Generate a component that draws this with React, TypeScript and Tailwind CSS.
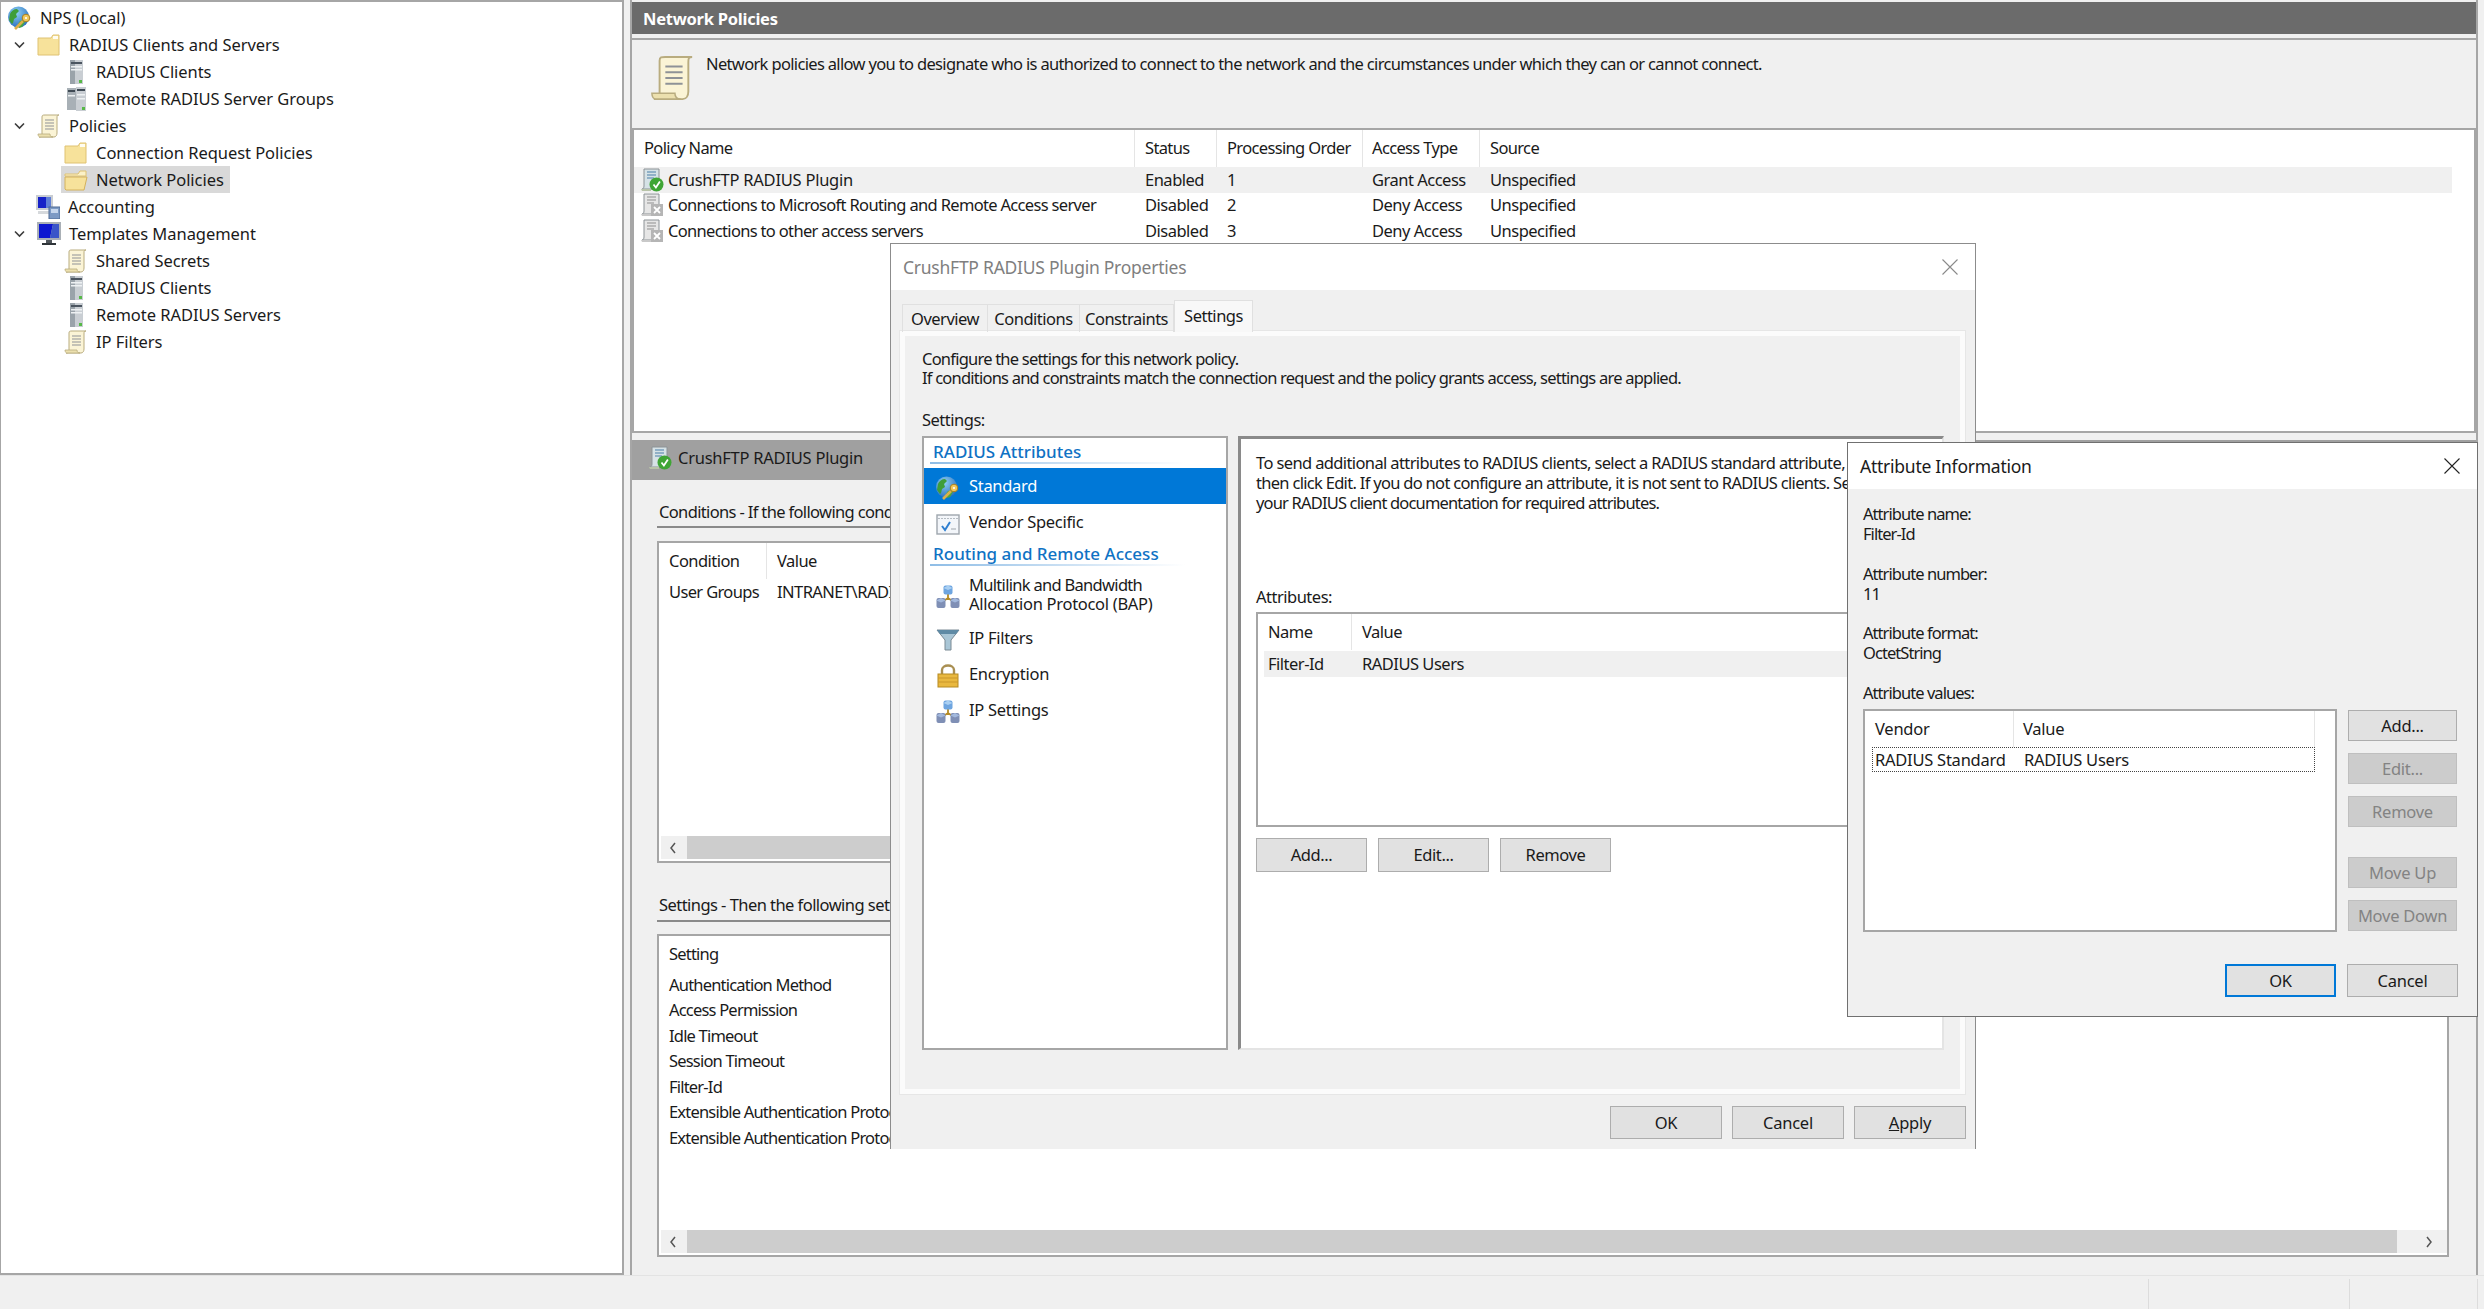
import React from "react";

const Globe = ({ s = 24 }: { s?: number }) => (
  <svg width={s} height={s} viewBox="0 0 24 24" className="shrink-0">
    <defs>
      <radialGradient id="gl" cx="0.4" cy="0.3" r="0.8">
        <stop offset="0" stopColor="#8fd0f5" />
        <stop offset="1" stopColor="#1f66b8" />
      </radialGradient>
    </defs>
    <circle cx="10.5" cy="11" r="10.5" fill="url(#gl)" />
    <path d="M2 8c1-3 4-5 7-5l2 2-3 3 1 3-3 2-1 4-1 1-3-4z" fill="#3f9e3a" />
    <path d="M12 15l4-1 1 2-3 5-3 1-1-4z" fill="#4aa63f" />
    <path d="M7 23l8-8" stroke="#dcb04a" strokeWidth="2.6" />
    <circle cx="18" cy="12" r="3.8" fill="#f0c75a" stroke="#a97f1f" strokeWidth="1" />
    <circle cx="18" cy="12" r="1.1" fill="#fff" />
  </svg>
);
const Folder = () => (
  <svg width="24" height="24" viewBox="0 0 24 24" className="shrink-0">
    <path d="M1 5h13l2-3h6v20H1z" fill="#f7e29b" stroke="#dfc272" strokeWidth="1" />
    <path d="M16 3h5v3h-5z" fill="#fffdf2" />
  </svg>
);
const FolderOpen = () => (
  <svg width="24" height="24" viewBox="0 0 24 24" className="shrink-0">
    <path d="M1 6h13l2-3h6v5H1z" fill="#fbf1c8" stroke="#dfc272" strokeWidth="1" />
    <path d="M1 21V9h22l-3 13H2z" fill="#f7e29b" stroke="#d4b25c" strokeWidth="1" />
  </svg>
);
const Server = () => (
  <svg width="24" height="24" viewBox="0 0 24 24" className="shrink-0">
    <rect x="6" y="0" width="13" height="24" fill="#c9ced3" />
    <rect x="6" y="0" width="5" height="24" fill="#9aa3aa" />
    <rect x="7" y="2" width="11" height="2" fill="#4b5560" />
    <rect x="7" y="6" width="11" height="1.5" fill="#eef1f3" />
    <rect x="7" y="9" width="11" height="1.5" fill="#eef1f3" />
    <rect x="15" y="20" width="3" height="3" fill="#57b947" />
  </svg>
);
const ServerGroup = () => (
  <svg width="24" height="24" viewBox="0 0 24 24" className="shrink-0">
    <rect x="3" y="1" width="9" height="22" fill="#a8b0b6" />
    <rect x="4" y="3" width="7" height="2" fill="#3f4a54" />
    <rect x="4" y="8" width="7" height="1.5" fill="#eef1f3" />
    <rect x="12" y="0" width="10" height="24" fill="#c9ced3" />
    <rect x="13" y="2" width="8" height="2" fill="#3f4a54" />
    <rect x="13" y="7" width="8" height="1.5" fill="#eef1f3" />
    <rect x="13" y="11" width="8" height="1.5" fill="#eef1f3" />
    <rect x="18" y="20" width="3" height="3" fill="#57b947" />
  </svg>
);
const Scroll = ({ s = 24 }: { s?: number }) => (
  <svg width={s} height={s} viewBox="0 0 24 24" className="shrink-0">
    <path d="M5 3c0-2 1-2 3-2h14c-2 0-2 1-2 3v15c0 2-1 4-3 4H2c2 0 3-1 3-3z" fill="#fbf4d6" stroke="#b9ac7f" strokeWidth="1" />
    <path d="M1 20h12c0 2 1 3 3 3H3c-1 0-2-1-2-3z" fill="#ece0ae" stroke="#b9ac7f" strokeWidth="0.8" />
    <path d="M8 6h9M8 9h9M8 12h9M8 15h9" stroke="#8f9297" strokeWidth="1" />
  </svg>
);
const Accounting = () => (
  <svg width="24" height="24" viewBox="0 0 24 24" className="shrink-0">
    <rect x="0" y="0" width="17" height="15" fill="#c9cdd2" />
    <rect x="2" y="2" width="8" height="11" fill="#1621c8" />
    <rect x="10" y="2" width="5" height="11" fill="#5f7fd6" />
    <path d="M2 16h12v3H2z" fill="#d6d9dc" />
    <rect x="13" y="12" width="11" height="12" fill="#7d9ac4" stroke="#4e6a94" strokeWidth="1" />
    <rect x="15" y="14" width="7" height="4" fill="#c6d6ec" />
  </svg>
);
const Monitor = () => (
  <svg width="24" height="24" viewBox="0 0 24 24" className="shrink-0">
    <rect x="0" y="0" width="24" height="18" fill="#aab0b6" />
    <path d="M2 2h14l-3 14H2z" fill="#0c16d0" />
    <path d="M16 2h6v14h-9z" fill="#3a55c9" />
    <rect x="9" y="18" width="6" height="3" fill="#50565c" />
    <rect x="5" y="21" width="14" height="2" fill="#2f3439" />
  </svg>
);
const Policy = ({ on }: { on: boolean }) => (
  <svg width="24" height="24" viewBox="0 0 24 24" className="shrink-0">
    <path d="M4 1h15v20H2c1 0 2-1 2-3z" fill={on ? "#d6e2e6" : "#e6e6e6"} stroke="#8c9296" strokeWidth="1" />
    <path d="M7 4h9M7 7h9M7 10h7" stroke={on ? "#4a7ea8" : "#8f8f8f"} strokeWidth="1" />
    <path d="M1 21h10v2H2z" fill={on ? "#b8c3a8" : "#c9c9c9"} />
    {on ? (
      <>
        <circle cx="16.5" cy="16.5" r="7" fill="#3fa535" />
        <path d="M13.5 16.5l2.4 3 4-6" fill="none" stroke="#fff" strokeWidth="1.8" />
      </>
    ) : (
      <>
        <rect x="11" y="11" width="12" height="12" fill="#b5b5b5" />
        <path d="M14 14l6 6M20 14l-6 6" stroke="#fff" strokeWidth="1.8" />
      </>
    )}
  </svg>
);
const VendorIcon = () => (
  <svg width="24" height="24" viewBox="0 0 24 24" className="shrink-0">
    <rect x="1" y="3" width="22" height="19" fill="#f3f6fa" stroke="#9ea6ad" strokeWidth="1.4" />
    <path d="M2 6.5h20" stroke="#b4bbc2" strokeWidth="1" strokeDasharray="2 1" />
    <path d="M6 14l3 4 5-8" fill="none" stroke="#2f7fd0" strokeWidth="2" />
    <path d="M15 17h5" stroke="#9ea6ad" strokeWidth="1" />
  </svg>
);
const Nodes = () => (
  <svg width="24" height="24" viewBox="0 0 24 24" className="shrink-0">
    <path d="M12 7v8M6 17l6-4 6 4" stroke="#b58a22" strokeWidth="1.8" fill="none" />
    <rect x="7.5" y="0.5" width="9" height="9" rx="2" fill="#6ea5e0" />
    <path d="M7.5 3l4.5-2.5L16.5 3l-4.5 2z" fill="#a9cff2" />
    <rect x="0.5" y="13" width="9" height="10" rx="2" fill="#7f8fb5" />
    <path d="M0.5 15.5l4.5-2.5 4.5 2.5-4.5 2z" fill="#a3b9dd" />
    <rect x="14.5" y="13" width="9" height="10" rx="2" fill="#7f8fb5" />
    <path d="M14.5 15.5l4.5-2.5 4.5 2.5-4.5 2z" fill="#a3b9dd" />
  </svg>
);
const Funnel = () => (
  <svg width="24" height="24" viewBox="0 0 24 24" className="shrink-0">
    <path d="M1 2h22L15 12v10l-6 0V12z" fill="#a9c6d6" stroke="#7b8a94" strokeWidth="1" />
    <path d="M1 2h22l-3 4H4z" fill="#5e8aa5" />
  </svg>
);
const Lock = () => (
  <svg width="24" height="24" viewBox="0 0 24 24" className="shrink-0">
    <path d="M6 10V6c0-6 12-6 12 0v4" fill="none" stroke="#a98f52" strokeWidth="2.4" />
    <rect x="2" y="10" width="20" height="13" fill="#e9b83f" stroke="#b58a22" strokeWidth="1" />
    <path d="M2 14h20M2 18h20" stroke="#c9962a" strokeWidth="1" />
  </svg>
);
const Chev = () => (
  <svg width="11" height="8" viewBox="0 0 11 8" className="shrink-0">
    <path d="M1 1.5l4.5 4.5L10 1.5" fill="none" stroke="#3c3c3c" strokeWidth="1.6" />
  </svg>
);
const CloseX = ({ c }: { c: string }) => (
  <svg width="16" height="16" viewBox="0 0 16 16">
    <path d="M0.5 0.5l15 15M15.5 0.5l-15 15" stroke={c} strokeWidth="1.1" />
  </svg>
);

const TreeRow = ({ ind, chev, icon, text }: { ind: number; chev?: boolean; icon: React.ReactNode; text: string }) => (
  <div className="flex h-[27px] items-center" style={{ paddingLeft: ind }}>
    {chev && <span className="mr-[12px] flex w-[11px]"><Chev /></span>}
    <div className="flex h-[27px] items-center">
      {icon}
      <span className="ml-[8px] whitespace-nowrap">{text}</span>
    </div>
  </div>
);

const Btn = ({ w, h, children, off, blue }: { w: string; h: string; children: React.ReactNode; off?: boolean; blue?: boolean }) => (
  <div
    className={`flex shrink-0 items-center justify-center ${w} ${h} ${
      blue
        ? "border-2 border-[#0078d7] bg-[#e1e1e1]"
        : off
        ? "border border-[#bfbfbf] bg-[#cccccc] text-[#838383]"
        : "border border-[#adadad] bg-[#e1e1e1]"
    }`}
  >
    {children}
  </div>
);

const PolicyRow = ({ on, name, st, n, acc, sel, nt }: { on: boolean; name: string; st: string; n: string; acc: string; sel?: boolean; nt: string }) => (
  <div className={`flex h-[25.5px] items-center tracking-[-0.5px] ${sel ? "mr-[22px] bg-[#f0f0f0]" : ""}`}>
    <div className="flex w-[501px] items-center pl-[6px]">
      <Policy on={on} />
      <span className={`ml-[4px] whitespace-nowrap ${nt}`}>{name}</span>
    </div>
    <div className="w-[82px] pl-[10px]">{st}</div>
    <div className="w-[146px] pl-[10px]">{n}</div>
    <div className="w-[117px] pl-[9px]">{acc}</div>
    <div className="pl-[10px]">Unspecified</div>
  </div>
);

const Scrollbar = () => (
  <div className="mt-auto mb-[2px] ml-[2px] flex h-[23px] bg-[#f0f0f0]">
    <div className="flex w-[26px] items-center justify-center pr-[2px]">
      <svg width="8" height="12" viewBox="0 0 8 12"><path d="M6 1L2 6l4 5" fill="none" stroke="#555" strokeWidth="1.5" /></svg>
    </div>
    <div className="w-[1711px] bg-[#cdcdcd]" />
    <div className="flex w-[50px] items-center justify-end pr-[14px]">
      <svg width="8" height="12" viewBox="0 0 8 12"><path d="M2 1l4 5-4 5" fill="none" stroke="#555" strokeWidth="1.5" /></svg>
    </div>
  </div>
);

const GroupHead = ({ text }: { text: string }) => (
  <div className="relative h-[26px] pl-[9px]">
    <span className="absolute top-[4px] whitespace-nowrap text-[17px] font-medium tracking-[0px] text-[#0f72c4]">{text}</span>
    <div className="absolute bottom-0 left-[6px] h-[2px] w-[255px] bg-linear-to-r from-[#8fbde6] to-transparent" />
  </div>
);

const ListItem = ({ icon, h, sel, children }: { icon: React.ReactNode; h: string; sel?: boolean; children: React.ReactNode }) => (
  <div className={`flex items-center gap-[9px] pl-[12px] tracking-[-0.3px] ${h} ${sel ? "bg-[#0078d7] text-white" : ""}`}>
    <span className="mt-[4px] flex">{icon}</span>
    <div className="pb-[2px] leading-[19px]">{children}</div>
  </div>
);

export default function App() {
  return (
    <div className="relative flex h-[1309px] w-[2484px] flex-col overflow-hidden bg-[#f0f0f0] font-['Noto_Sans',sans-serif] text-[16.5px] leading-[20px] tracking-[-0.25px] text-[#1a1a1a]">
      <div className="flex h-[1275px]">
        {/* Tree */}
        <div className="h-[1275px] w-[624px] shrink-0 border-2 border-l-[1px] border-[#a6a6a6] bg-white pt-[2px] tracking-[-0.05px]">
          <TreeRow ind={7} icon={<Globe />} text="NPS (Local)" />
          <TreeRow ind={13} chev icon={<Folder />} text="RADIUS Clients and Servers" />
          <TreeRow ind={63} icon={<Server />} text="RADIUS Clients" />
          <TreeRow ind={63} icon={<ServerGroup />} text="Remote RADIUS Server Groups" />
          <TreeRow ind={13} chev icon={<Scroll />} text="Policies" />
          <TreeRow ind={63} icon={<Folder />} text="Connection Request Policies" />
          <div className="flex h-[27px] items-center pl-[60px]">
            <div className="flex h-[27px] items-center bg-[#d9d9d9] pl-[3px] pr-[6px]">
              <FolderOpen />
              <span className="ml-[8px] whitespace-nowrap">Network Policies</span>
            </div>
          </div>
          <TreeRow ind={35} icon={<Accounting />} text="Accounting" />
          <TreeRow ind={13} chev icon={<Monitor />} text="Templates Management" />
          <TreeRow ind={63} icon={<Scroll />} text="Shared Secrets" />
          <TreeRow ind={63} icon={<Server />} text="RADIUS Clients" />
          <TreeRow ind={63} icon={<Server />} text="Remote RADIUS Servers" />
          <TreeRow ind={63} icon={<Scroll />} text="IP Filters" />
        </div>

        {/* Right pane */}
        <div className="ml-[6px] flex w-[1848px] shrink-0 flex-col border-x-2 border-[#a6a6a6]">
          <div className="mt-[2px] flex h-[32px] shrink-0 items-center bg-[#6b6b6b] pl-[11px] pt-[2px] font-bold text-white">Network Policies</div>
          <div className="mt-[4px] flex h-[90px] shrink-0 border-t-2 border-[#a6a6a6] bg-[#f0f0f0] pl-[18px] pt-[15px]">
            <Scroll s={46} />
            <div className="ml-[10px] mt-[-1px] whitespace-nowrap tracking-[-0.66px]">Network policies allow you to designate who is authorized to connect to the network and the circumstances under which they can or cannot connect.</div>
          </div>
          <div className="h-[305px] shrink-0 border-2 border-[#a6a6a6] bg-white">
            <div className="flex h-[37px] items-center tracking-[-0.65px]">
              <div className="flex h-full w-[501px] items-center border-r border-[#e5e5e5] pb-[1px] pl-[10px]">Policy Name</div>
              <div className="flex h-full w-[82px] items-center border-r border-[#e5e5e5] pb-[1px] pl-[10px]">Status</div>
              <div className="flex h-full w-[146px] items-center border-r border-[#e5e5e5] pb-[1px] pl-[10px]">Processing Order</div>
              <div className="flex h-full w-[117px] items-center border-r border-[#e5e5e5] pb-[1px] pl-[9px]">Access Type</div>
              <div className="pb-[1px] pl-[10px]">Source</div>
            </div>
            <PolicyRow sel on nt="tracking-[-0.25px]" name="CrushFTP RADIUS Plugin" st="Enabled" n="1" acc="Grant Access" />
            <PolicyRow on={false} nt="tracking-[-0.67px]" name="Connections to Microsoft Routing and Remote Access server" st="Disabled" n="2" acc="Deny Access" />
            <PolicyRow on={false} nt="tracking-[-0.67px]" name="Connections to other access servers" st="Disabled" n="3" acc="Deny Access" />
          </div>
          <div className="mt-[7px] flex h-[40px] shrink-0 items-center bg-[#a0a0a0] pb-[5px] pl-[16px]">
            <Policy on />
            <span className="ml-[6px]">CrushFTP RADIUS Plugin</span>
          </div>
          <div className="flex flex-1 flex-col pl-[25px] pr-[27px]">
            <div className="flex h-[48px] shrink-0 items-end border-b-2 border-[#8a8a8a] pb-[4px] pl-[2px] tracking-[-0.65px]">Conditions - If the following conditions are met:</div>
            <div className="mt-[13px] flex h-[322px] shrink-0 flex-col border-2 border-[#a6a6a6] bg-white tracking-[-0.55px]">
              <div className="flex h-[36px] shrink-0 items-center">
                <div className="flex h-full w-[108px] items-center border-r border-[#e5e5e5] pl-[10px]">Condition</div>
                <div className="pl-[10px]">Value</div>
              </div>
              <div className="flex h-[26px] items-center">
                <div className="w-[108px] pl-[10px] tracking-[-0.65px]">User Groups</div>
                <div className="pl-[10px]">INTRANET\RADIUS Users</div>
              </div>
              <Scrollbar />
            </div>
            <div className="mt-[32px] flex h-[27px] shrink-0 items-start border-b-2 border-[#8a8a8a] pl-[2px] tracking-[-0.55px]">Settings - Then the following settings are applied:</div>
            <div className="mt-[12px] flex h-[323px] shrink-0 flex-col border-2 border-[#a6a6a6] bg-white tracking-[-0.8px]">
              <div className="flex h-[36px] shrink-0 items-center pl-[10px]">Setting</div>
              {["Authentication Method", "Access Permission", "Idle Timeout", "Session Timeout", "Filter-Id", "Extensible Authentication Protocol Method", "Extensible Authentication Protocol Configuration"].map((t) => (
                <div key={t} className="flex h-[25.5px] shrink-0 items-center whitespace-nowrap pl-[10px]">{t}</div>
              ))}
              <Scrollbar />
            </div>
          </div>
        </div>
      </div>

      {/* Status bar */}
      <div className="flex h-[34px] justify-end border-t border-[#e3e3e3] pr-[6px] pt-[3px]">
        <div className="w-[201px] border-l border-[#dcdcdc]" />
        <div className="w-[129px] border-x border-[#dcdcdc]" />
      </div>

      {/* Properties window */}
      <div className="absolute left-[890px] top-[243px] flex h-[906px] w-[1086px] flex-col border-x border-t border-[#8c8c8c] bg-[#f0f0f0]">
        <div className="flex h-[46px] shrink-0 items-center justify-between bg-white pl-[12px] pr-[17px] text-[17.5px] text-[#7f7f7f]">
          <span>CrushFTP RADIUS Plugin Properties</span>
          <CloseX c="#8a8a8a" />
        </div>
        <div className="relative z-10 ml-[11px] mt-[10px] flex h-[32px] items-end tracking-[-0.5px]">
          <div className="flex h-[28px] w-[86px] items-center justify-center border border-b-0 border-[#e0e0e0]">Overview</div>
          <div className="flex h-[28px] w-[92px] items-center justify-center border-y border-r border-b-0 border-[#e0e0e0]">Conditions</div>
          <div className="flex h-[28px] w-[94px] items-center justify-center border-y border-r border-b-0 border-[#e0e0e0]">Constraints</div>
          <div className="flex h-[32px] w-[79px] items-center justify-center border border-b-0 border-[#e0e0e0] bg-[#f8f8f8] pb-[2px]">Settings</div>
        </div>
        <div className="ml-[9px] mt-[-1px] h-[763px] w-[1065px] border-[5px] border-[#fbfbfb] bg-[#f0f0f0] pl-[17px] outline outline-[#e6e6e6]">
          <div className="pt-[13px] leading-[19px] tracking-[-0.78px]">
            <div className="whitespace-nowrap">Configure the settings for this network policy.</div>
            <div className="whitespace-nowrap">If conditions and constraints match the connection request and the policy grants access, settings are applied.</div>
          </div>
          <div className="mt-[23px] h-[20px] tracking-[-0.5px]">Settings:</div>
          <div className="mt-[6px] flex h-[614px] gap-[10px]">
            <div className="w-[306px] shrink-0 border-2 border-[#a6a6a6] bg-white">
              <GroupHead text="RADIUS Attributes" />
              <div className="mt-[4px]" />
              <ListItem sel h="h-[36px]" icon={<Globe />}>Standard</ListItem>
              <ListItem h="h-[36px]" icon={<VendorIcon />}>Vendor Specific</ListItem>
              <GroupHead text="Routing and Remote Access" />
              <div className="mt-[4px]" />
              <ListItem h="h-[50px]" icon={<Nodes />}>
                <div className="tracking-[-0.7px]">Multilink and Bandwidth</div>
                <div>Allocation Protocol (BAP)</div>
              </ListItem>
              <ListItem h="h-[36px]" icon={<Funnel />}>IP Filters</ListItem>
              <ListItem h="h-[36px]" icon={<Lock />}>Encryption</ListItem>
              <ListItem h="h-[36px]" icon={<Nodes />}>IP Settings</ListItem>
            </div>
            <div className="w-[706px] shrink-0 border-2 border-l-[3px] border-t-[3px] border-b-[#e4e4e4] border-l-[#8a8a8a] border-r-[#e4e4e4] border-t-[#8a8a8a] bg-white pl-[15px] pt-[14px]">
              <div className="whitespace-nowrap leading-[20px]">
                <div className="tracking-[-0.62px]">To send additional attributes to RADIUS clients, select a RADIUS standard attribute, and</div>
                <div className="tracking-[-0.7px]">then click Edit. If you do not configure an attribute, it is not sent to RADIUS clients. See</div>
                <div className="tracking-[-0.83px]">your RADIUS client documentation for required attributes.</div>
              </div>
              <div className="mt-[74px] tracking-[-0.5px]">Attributes:</div>
              <div className="mt-[5px] h-[215px] w-[670px] border-2 border-[#a6a6a6] tracking-[-0.5px]">
                <div className="flex h-[36px] items-center">
                  <div className="flex h-full w-[94px] items-center border-r border-[#e5e5e5] pl-[10px]">Name</div>
                  <div className="pl-[10px]">Value</div>
                </div>
                <div className="ml-[6px] mt-[1px] flex h-[26px] items-center bg-[#f0f0f0]">
                  <div className="w-[88px] pl-[4px]">Filter-Id</div>
                  <div className="pl-[10px]">RADIUS Users</div>
                </div>
              </div>
              <div className="mt-[11px] flex gap-[11px] tracking-[-0.4px]">
                <Btn w="w-[111px]" h="h-[34px]">Add...</Btn>
                <Btn w="w-[111px]" h="h-[34px]">Edit...</Btn>
                <Btn w="w-[111px]" h="h-[34px]">Remove</Btn>
              </div>
            </div>
          </div>
        </div>
        <div className="mt-[12px] flex justify-end gap-[10px] pr-[9px]">
          <Btn w="w-[112px]" h="h-[33px]">OK</Btn>
          <Btn w="w-[112px]" h="h-[33px]">Cancel</Btn>
          <Btn w="w-[112px]" h="h-[33px]"><span><span className="underline">A</span>pply</span></Btn>
        </div>
      </div>

      {/* Attribute window */}
      <div className="absolute left-[1847px] top-[442px] flex h-[575px] w-[631px] flex-col border border-[#707070] bg-[#f0f0f0]">
        <div className="flex h-[46px] shrink-0 items-center justify-between bg-white pl-[12px] pr-[17px] text-[17.5px]">
          <span>Attribute Information</span>
          <CloseX c="#222222" />
        </div>
        <div className="pl-[15px] pt-[15px]">
          <div className="tracking-[-0.95px]">
            <div>Attribute name:</div>
            <div>Filter-Id</div>
            <div className="mt-[20px]">Attribute number:</div>
            <div>11</div>
            <div className="mt-[19px]">Attribute format:</div>
            <div>OctetString</div>
            <div className="mt-[20px]">Attribute values:</div>
          </div>
          <div className="mt-[6px] flex gap-[11px]">
            <div className="h-[223px] w-[474px] border-2 border-[#a6a6a6] bg-white">
              <div className="flex h-[36px] items-center">
                <div className="flex h-full w-[149px] items-center border-r border-[#e5e5e5] pl-[10px]">Vendor</div>
                <div className="flex h-full w-[301px] items-center border-r border-[#e5e5e5] pl-[9px]">Value</div>
              </div>
              <div className="ml-[7px] flex h-[25px] w-[443px] items-center border border-dotted border-[#444444]">
                <div className="w-[142px] whitespace-nowrap pl-[2px]">RADIUS Standard</div>
                <div className="pl-[9px]">RADIUS Users</div>
              </div>
            </div>
            <div className="flex w-[109px] flex-col pt-[1px]">
              <Btn w="w-[109px]" h="h-[31px]">Add...</Btn>
              <div className="mt-[12px]"><Btn off w="w-[109px]" h="h-[31px]">Edit...</Btn></div>
              <div className="mt-[12px]"><Btn off w="w-[109px]" h="h-[31px]">Remove</Btn></div>
              <div className="mt-[30px]"><Btn off w="w-[109px]" h="h-[31px]">Move Up</Btn></div>
              <div className="mt-[12px]"><Btn off w="w-[109px]" h="h-[31px]">Move Down</Btn></div>
            </div>
          </div>
          <div className="mt-[32px] flex w-[595px] justify-end gap-[11px]">
            <Btn blue w="w-[111px]" h="h-[33px]">OK</Btn>
            <Btn w="w-[111px]" h="h-[33px]">Cancel</Btn>
          </div>
        </div>
      </div>
    </div>
  );
}
